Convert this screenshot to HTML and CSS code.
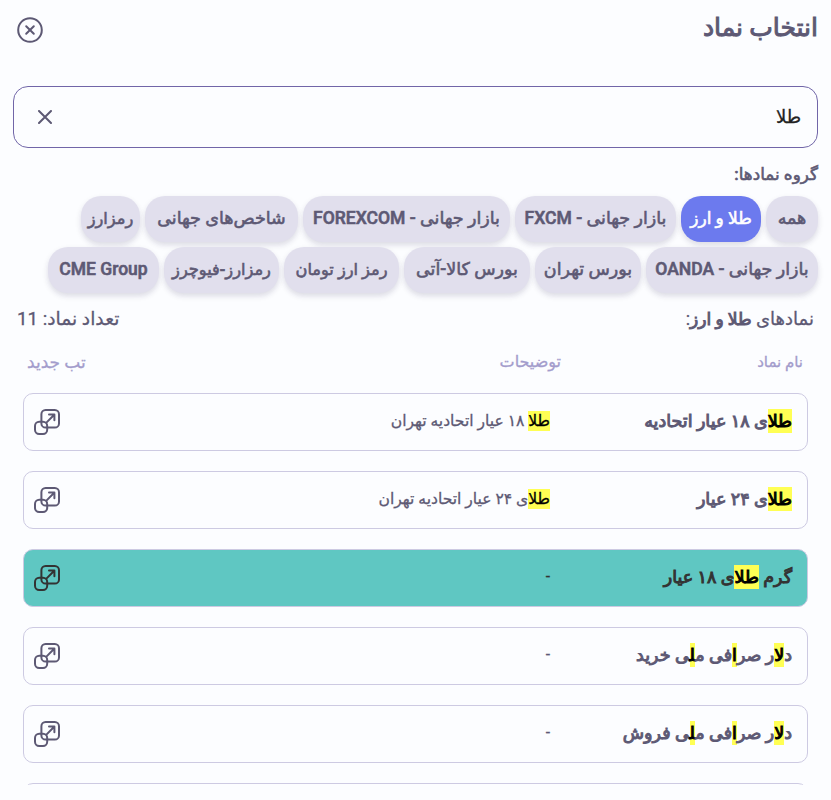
FILE: index.html
```html
<!DOCTYPE html>
<html lang="fa" dir="rtl">
<head>
    <meta charset="UTF-8">
    <meta name="viewport" content="width=device-width, initial-scale=1.0">
    <title>انتخاب نماد</title>
    <link rel="stylesheet" href="styles.css">
</head>
<body>
    <svg width="0" height="0" class="sprite">
        <symbol id="icon-newtab" viewBox="0 0 26 26">
            <rect x="7.4" y="1" width="17.6" height="17.6" rx="4.2"/>
            <rect x="1" y="12.8" width="12.2" height="12.2" rx="4.2"/>
            <path d="M12.4 13.6L20.2 5.8M15 5.6h5.4v5.6"/>
        </symbol>
    </svg>
    <div class="modal">
        <header class="modal-header">
            <h1>انتخاب نماد</h1>
            <button class="close-btn" type="button">
                <svg width="26" height="26" viewBox="0 0 26 26"><circle cx="13" cy="13" r="11.8"/><path d="M9.2 9.2l7.6 7.6M16.8 9.2l-7.6 7.6"/></svg>
            </button>
        </header>

        <div class="search-box">
            <input class="search-input" type="text" value="طلا">
            <button class="clear-btn" type="button">
                <svg width="14" height="14" viewBox="0 0 14 14"><path d="M1 1l12 12M13 1L1 13"/></svg>
            </button>
        </div>

        <h2 class="group-title">گروه نمادها:</h2>
        <div class="groups">
            <button class="chip w-all">همه</button>
            <button class="chip w-gold active">طلا و ارز</button>
            <button class="chip w-fxcm">بازار جهانی - FXCM</button>
            <button class="chip w-forex">بازار جهانی - FOREXCOM</button>
            <button class="chip w-index">شاخص‌های جهانی</button>
            <button class="chip w-crypto small">رمزارز</button>
            <button class="chip w-oanda">بازار جهانی - OANDA</button>
            <button class="chip w-tehran">بورس تهران</button>
            <button class="chip w-kala">بورس کالا-آتی</button>
            <button class="chip w-toman small">رمز ارز تومان</button>
            <button class="chip w-futures small">رمزارز-فیوچرز</button>
            <button class="chip w-cme">CME Group</button>
        </div>

        <div class="summary">
            <div>نمادهای <b>طلا و ارز</b>:</div>
            <div class="count">تعداد نماد: 11</div>
        </div>

        <div class="list-head">
            <span class="col-name">نام نماد</span>
            <span class="col-desc">توضیحات</span>
            <span class="col-tab">تب جدید</span>
        </div>

        <div class="list">
            <div class="item">
                <div class="name"><mark>طلا</mark>ی ۱۸ عیار اتحادیه</div>
                <div class="desc"><mark>طلا</mark> ۱۸ عیار اتحادیه تهران</div>
                <svg class="newtab"><use href="#icon-newtab"/></svg>
            </div>
            <div class="item">
                <div class="name"><mark>طلا</mark>ی ۲۴ عیار</div>
                <div class="desc"><mark>طلا</mark>ی ۲۴ عیار اتحادیه تهران</div>
                <svg class="newtab"><use href="#icon-newtab"/></svg>
            </div>
            <div class="item selected">
                <div class="name">گرم <mark>طلا</mark>ی ۱۸ عیار</div>
                <div class="desc">-</div>
                <svg class="newtab"><use href="#icon-newtab"/></svg>
            </div>
            <div class="item">
                <div class="name">د<mark>لا</mark>ر صر<mark>ا</mark>فی م<mark>ل</mark>ی خرید</div>
                <div class="desc">-</div>
                <svg class="newtab"><use href="#icon-newtab"/></svg>
            </div>
            <div class="item">
                <div class="name">د<mark>لا</mark>ر صر<mark>ا</mark>فی م<mark>ل</mark>ی فروش</div>
                <div class="desc">-</div>
                <svg class="newtab"><use href="#icon-newtab"/></svg>
            </div>
            <div class="item"></div>
        </div>
    </div>
</body>
</html>
```
FILE: styles.css
```css
* {
    box-sizing: border-box;
}
body {
    margin: 0;
    background-color: #fcfdff;
    color: #5d5974;
    font-family: Roboto, "DejaVu Sans", sans-serif;
    -webkit-text-stroke: 0.3px;
}
button {
    font-family: inherit;
    border: none;
    background: none;
    padding: 0;
    cursor: pointer;
}
svg {
    display: block;
    fill: none;
    stroke: currentColor;
    stroke-width: 2;
    stroke-linecap: round;
    stroke-linejoin: round;
}
.sprite {
    position: absolute;
}
.modal {
    height: 785px;
    padding: 0 13px;
    overflow: hidden;
}
.modal-header {
    display: flex;
    justify-content: space-between;
    align-items: center;
    height: 60px;
    padding-left: 4px;
}
h1 {
    margin: 0 0 4px;
    font-size: 25px;
    font-weight: 500;
    line-height: 30px;
    -webkit-text-stroke: 1px;
}
.close-btn {
    color: #5d5974;
}
.search-box {
    display: flex;
    align-items: center;
    justify-content: space-between;
    height: 62px;
    margin-top: 26px;
    padding: 0 16px 0 24px;
    border: 1.5px solid #7166a8;
    border-radius: 15px;
}
.search-input {
    flex: 1;
    padding: 0 0 2px;
    border: none;
    outline: none;
    background: none;
    color: #222;
    font-family: inherit;
    font-size: 18px;
    -webkit-text-stroke: 0.3px;
}
.clear-btn {
    color: #5d5974;
}
.group-title {
    margin: 13px 0 9px;
    font-size: 16.8px;
    font-weight: 500;
    line-height: 26px;
    -webkit-text-stroke: 0.6px;
}
.groups {
    display: flex;
    flex-wrap: wrap;
    gap: 5px;
}
.chip {
    height: 46px;
    padding-bottom: 2px;
    border-radius: 20px;
    background-color: #e1dfed;
    color: #5d5974;
    font-size: 17.5px;
    font-weight: 500;
    white-space: nowrap;
    -webkit-text-stroke: 0.6px;
    box-shadow: 0 3px 5px rgba(60, 55, 90, 0.13), 0 3px 10px rgba(60, 55, 90, 0.04);
}
.chip.active {
    background-color: #6c7aee;
    color: #fff;
    font-size: 17px;
}
.chip.small {
    font-size: 16.2px;
}
.w-all { width: 52px; }
.w-gold { width: 80px; }
.w-fxcm { width: 161px; }
.w-forex { width: 207px; }
.w-index { width: 153px; }
.w-crypto { width: 59px; }
.w-oanda { width: 172px; }
.w-tehran { width: 106px; }
.w-kala { width: 126px; }
.w-toman { width: 115px; }
.w-futures { width: 115px; }
.w-cme { width: 111px; }
.summary {
    display: flex;
    justify-content: space-between;
    margin-top: 12px;
    padding: 0 4px;
    font-size: 18px;
    line-height: 28px;
}
.summary b {
    font-size: 17px;
    font-weight: 500;
    -webkit-text-stroke: 1px;
}
.count {
    font-size: 18.7px;
}
.list-head {
    display: flex;
    margin-top: 16px;
    padding: 0 15px 0 14px;
    color: #a39ccc;
    font-size: 16px;
    line-height: 26px;
}
.col-name {
    width: 242px;
    font-size: 15px;
}
.col-desc {
    flex: 1;
}
.col-tab {
    font-size: 17px;
}
.list {
    padding: 18px 10px 0;
}
.item {
    display: flex;
    align-items: center;
    height: 58px;
    margin-bottom: 20px;
    padding: 0 15px 2px 10px;
    border: 1.5px solid #cdcae2;
    border-radius: 10px;
}
.item.selected {
    background-color: #5fc7c2;
    color: #333;
}
.name {
    width: 242px;
    font-size: 17.5px;
    font-weight: 500;
    white-space: nowrap;
    -webkit-text-stroke: 1px;
}
.desc {
    flex: 1;
    font-size: 15.6px;
    white-space: nowrap;
}
mark {
    padding: 2px 0;
    background-color: #ffff54;
    color: #000;
}
.desc mark {
    padding: 1px 0;
}
.newtab {
    width: 26px;
    height: 26px;
    margin-top: 1px;
}
```
